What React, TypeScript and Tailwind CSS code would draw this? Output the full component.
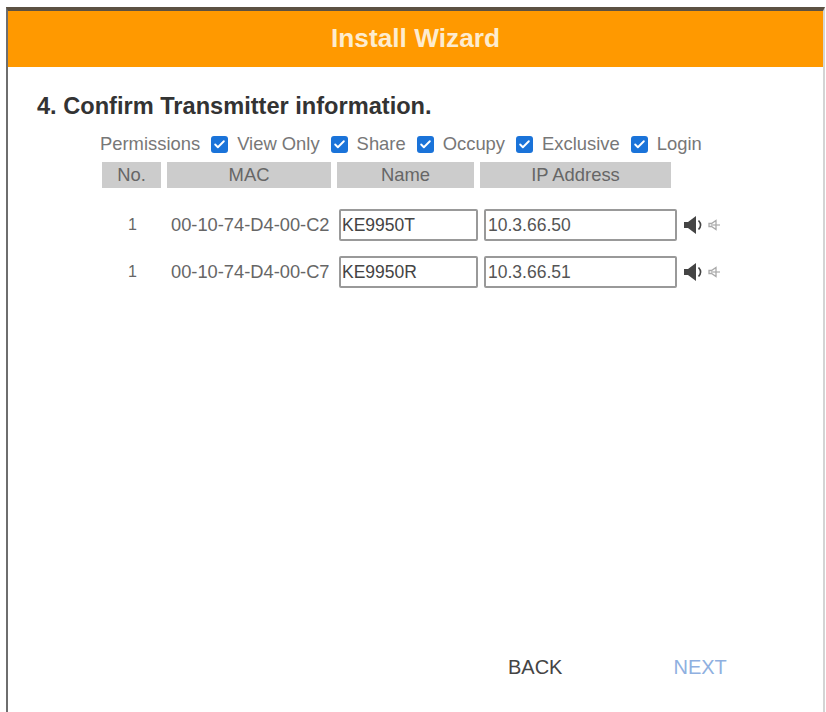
import { Check } from "lucide-react";

const permissions = ["View Only", "Share", "Occupy", "Exclusive", "Login"];

const devices = [
  { no: 1, mac: "00-10-74-D4-00-C2", name: "KE9950T", ip: "10.3.66.50" },
  { no: 1, mac: "00-10-74-D4-00-C7", name: "KE9950R", ip: "10.3.66.51" },
];

// ── Helpers ───────────────────────────────────────────────────────────────────

function Speaker() {
  return (
    <svg width="19" height="20" viewBox="0 0 19 20" className="text-[#444]">
      <path d="M0 7h4l8-6v18l-8-6H0z" fill="currentColor" />
      <path d="M14.5 5.5c2.6 2.8 2.6 6.2 0 9" fill="none" stroke="currentColor" strokeWidth="1.6" />
    </svg>
  );
}

function Mute() {
  return (
    <svg width="12" height="12" viewBox="0 0 12 12" className="text-[#aaa]">
      <path d="M1 4.5h2.5L8 1.5v9L3.5 7.5H1z" fill="none" stroke="currentColor" strokeWidth="1.3" />
      <path d="M3 6h9" stroke="currentColor" strokeWidth="1.2" />
    </svg>
  );
}

function Checkbox() {
  return (
    <span className="flex h-[17px] w-[17px] items-center justify-center rounded-[3px] bg-[#1a73d9]">
      <Check size={13} strokeWidth={3.5} className="text-white" />
    </span>
  );
}

// ── Component ─────────────────────────────────────────────────────────────────

export default function App() {
  return (
    <div className="h-[712px] w-[826px] overflow-hidden bg-white pt-[7px] pl-[6px] font-['Liberation_Sans',Arial,sans-serif]">
      <div className="h-[705px] w-[819px] border-t-4 border-r-2 border-l-2 border-t-[#5c5142] border-r-[#d4d4d4] border-l-[#6e6e6e]">
        {/* Header */}
        <div className="flex h-[56px] items-center justify-center bg-[#ff9900] text-[26.25px] font-bold text-[#fdeccf]">
          Install Wizard
        </div>

        {/* Body */}
        <div className="flex h-[645px] flex-col">
          <h2 className="mt-[26px] ml-[29px] text-[23.6px] leading-[27px] font-bold text-[#333]">
            4. Confirm Transmitter information.
          </h2>

          {/* Permissions */}
          <div className="mt-[14px] ml-[92px] flex h-[20px] items-center text-[18.4px] whitespace-nowrap text-[#777]">
            <span className="mr-[11px]">Permissions</span>
            {permissions.map((p) => (
              <label key={p} className="mr-[11px] flex items-center gap-[9px]">
                <Checkbox />
                <span>{p}</span>
              </label>
            ))}
          </div>

          {/* Table head */}
          <div className="mt-[8px] ml-[94px] flex gap-[6px] text-center text-[18.4px] leading-[26px] text-[#666]">
            <div className="w-[59px] bg-[#cccccc]">No.</div>
            <div className="w-[164px] bg-[#cccccc]">MAC</div>
            <div className="w-[137px] bg-[#cccccc]">Name</div>
            <div className="w-[191px] bg-[#cccccc]">IP Address</div>
          </div>

          {/* Rows */}
          <div className="mt-[21px] flex flex-col gap-[15px]">
            {devices.map((d) => (
              <div key={d.mac} className="ml-[94px] flex h-[32px] items-center text-[#666]">
                <span className="w-[59px] pl-[2px] text-center text-[16px]">{d.no}</span>
                <span className="ml-[10px] w-[168px] text-[18.3px] whitespace-nowrap">{d.mac}</span>
                <input
                  readOnly
                  value={d.name}
                  className="h-[32px] w-[139px] rounded-[2px] border-2 border-[#999] px-[1px] text-[17.5px] text-[#444] outline-none"
                />
                <input
                  readOnly
                  value={d.ip}
                  className="ml-[6px] h-[32px] w-[193px] rounded-[2px] border-2 border-[#999] px-[2px] text-[17.5px] text-[#555] outline-none"
                />
                <span className="ml-[7px] flex items-center gap-[5px]">
                  <Speaker />
                  <Mute />
                </span>
              </div>
            ))}
          </div>

          {/* Footer */}
          <div className="mt-auto mb-[30px] flex text-[20px]">
            <button className="ml-[500px] text-[#444]">BACK</button>
            <button className="ml-[111px] text-[#8fb0e0]">NEXT</button>
          </div>
        </div>
      </div>
    </div>
  );
}
